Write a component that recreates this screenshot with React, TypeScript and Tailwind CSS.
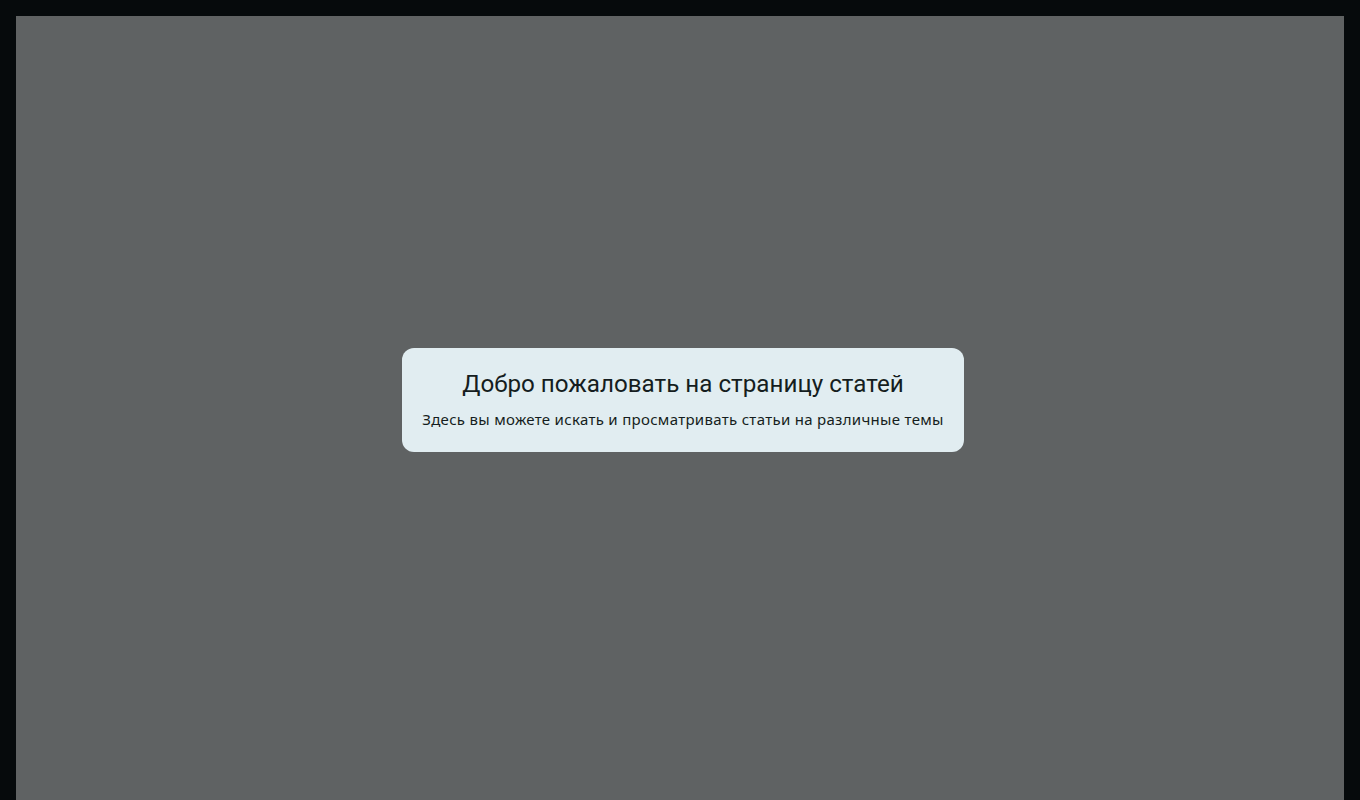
import React from "react";

export default function App() {
  return (
    <div className="w-[1360px] h-[800px] overflow-hidden bg-[#060a0c] pt-4 px-4">
      <div className="h-[784px] bg-[#5f6263] flex items-center justify-center pb-4 pl-[6px]">
        <div className="bg-[#e1edf1] rounded-xl px-5 pt-[20px] pb-[22px] flex flex-col items-center">
          <h1 className="text-[24.2px] leading-[32px] text-[#151d20] font-['Roboto',sans-serif]">
            Добро пожаловать на страницу статей
          </h1>
          <p className="mt-[8px] text-[15px] tracking-[0.3px] leading-[22px] text-[#151d20] font-['Noto_Sans',sans-serif]">
            Здесь вы можете искать и просматривать статьи на различные темы
          </p>
        </div>
      </div>
    </div>
  );
}
